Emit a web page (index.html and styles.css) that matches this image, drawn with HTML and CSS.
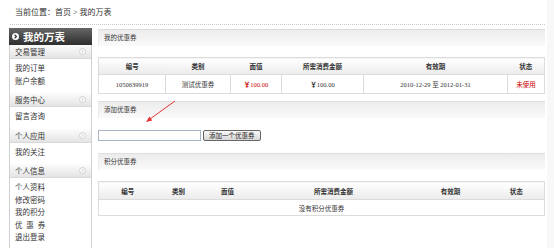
FILE: index.html
```html
<!DOCTYPE html>
<html lang="zh-CN">
<head>
  <meta charset="UTF-8">
  <meta name="viewport" content="width=device-width, initial-scale=1">
  <title>我的万表 - 我的优惠券</title>
  <link rel="stylesheet" href="styles.css">
</head>
<body>

<div class="page">
  <div class="crumb">当前位置：首页 &gt; 我的万表</div>

  <div class="wrap">
    <div class="side">
      <div class="side-title">
        <svg class="go" width="7" height="7" viewBox="0 0 7 7"><circle cx="3.5" cy="3.5" r="3.5" fill="#fff"/><path d="M2.6 1.8 L4.4 3.5 L2.6 5.2" fill="none" stroke="#333" stroke-width="1.2"/></svg>
        我的万表
      </div>

      <div class="group">交易管理
        <svg class="more" width="7" height="7" viewBox="0 0 7 7"><circle cx="3.5" cy="3.5" r="3" fill="#fff" stroke="#c4c4c4" stroke-width="0.8"/><path d="M2.9 2.2 L4.1 3.5 L2.9 4.8" fill="none" stroke="#aaa" stroke-width="0.8"/></svg>
      </div>
      <div class="items">
        <div>我的订单</div>
        <div>账户余额</div>
      </div>

      <div class="group">服务中心
        <svg class="more" width="7" height="7" viewBox="0 0 7 7"><circle cx="3.5" cy="3.5" r="3" fill="#fff" stroke="#c4c4c4" stroke-width="0.8"/><path d="M2.9 2.2 L4.1 3.5 L2.9 4.8" fill="none" stroke="#aaa" stroke-width="0.8"/></svg>
      </div>
      <div class="items">
        <div>留言咨询</div>
      </div>

      <div class="group">个人应用
        <svg class="more" width="7" height="7" viewBox="0 0 7 7"><circle cx="3.5" cy="3.5" r="3" fill="#fff" stroke="#c4c4c4" stroke-width="0.8"/><path d="M2.9 2.2 L4.1 3.5 L2.9 4.8" fill="none" stroke="#aaa" stroke-width="0.8"/></svg>
      </div>
      <div class="items">
        <div>我的关注</div>
      </div>

      <div class="group">个人信息
        <svg class="more" width="7" height="7" viewBox="0 0 7 7"><circle cx="3.5" cy="3.5" r="3" fill="#fff" stroke="#c4c4c4" stroke-width="0.8"/><path d="M2.9 2.2 L4.1 3.5 L2.9 4.8" fill="none" stroke="#aaa" stroke-width="0.8"/></svg>
      </div>
      <div class="items">
        <div>个人资料</div>
        <div>修改密码</div>
        <div>我的积分</div>
        <div class="spaced">优 惠 券</div>
        <div>退出登录</div>
      </div>
    </div>

    <div class="main">
      <div class="bar">我的优惠券</div>
      <table class="list mine">
        <colgroup>
          <col style="width:67px"><col style="width:65px"><col style="width:51px">
          <col style="width:82px"><col style="width:144px"><col style="width:37px">
        </colgroup>
        <thead>
          <tr><th>编号</th><th>类别</th><th>面值</th><th>所需消费金额</th><th>有效期</th><th>状态</th></tr>
        </thead>
        <tbody>
          <tr>
            <td>1050639919</td>
            <td>测试优惠券</td>
            <td class="red"><b>￥</b>100.00</td>
            <td><b>￥</b>100.00</td>
            <td>2010-12-29 至 2012-01-31</td>
            <td class="red">未使用</td>
          </tr>
        </tbody>
      </table>

      <div class="bar bar-add">添加优惠券</div>
      <div class="add-row">
        <input type="text">
        <button>添加一个优惠券</button>
      </div>

      <div class="bar bar-points">积分优惠券</div>
      <table class="list points">
        <colgroup>
          <col style="width:58px"><col style="width:44px"><col style="width:54px">
          <col style="width:158px"><col style="width:76px"><col style="width:56px">
        </colgroup>
        <thead>
          <tr><th>编号</th><th>类别</th><th>面值</th><th>所需消费金额</th><th>有效期</th><th>状态</th></tr>
        </thead>
        <tbody>
          <tr><td colspan="6">没有积分优惠券</td></tr>
        </tbody>
      </table>

      <!-- 标注箭头 -->
      <svg class="mark" width="36" height="28" viewBox="0 0 36 28">
        <line x1="33" y1="3" x2="8" y2="21" stroke="#e53333" stroke-width="1"/>
        <polygon points="4,24 10.3,22.5 7.4,18.4" fill="#e53333"/>
      </svg>
    </div>
  </div>
</div>

</body>
</html>
```

FILE: styles.css
```css
html { background: #f8f8f8; }
body { margin: 0; font-family: "Liberation Serif", "Noto Sans CJK SC", serif; font-size: 7px; color: #333; }
.page { width: 547px; height: 248px; background: #fff; overflow: hidden; }

.crumb { height: 24px; line-height: 26px; margin: 0 2px 0 10px; padding-left: 5px; font-size: 8px; border-bottom: 1px dotted #c8c8c8; }

.wrap { display: flex; margin-top: 3px; }

.side { width: 81px; margin-left: 9px; min-height: 230px; border-left: 1px solid #d0d0d0; border-right: 1px solid #d0d0d0; }
.side-title { display: flex; align-items: center; gap: 4px; height: 17px; margin: 0 -1px; padding-left: 3px; background: linear-gradient(#666, #2e2e2e); color: #fff; font-size: 10.5px; font-weight: bold; }
.group { display: flex; align-items: center; justify-content: space-between; height: 13px; padding: 0 5px; background: linear-gradient(#fcfcfc, #e4e4e4); border-bottom: 1px solid #d8d8d8; font-size: 7.5px; }
.items { padding: 4px 0 5px 5px; font-size: 7.5px; line-height: 12.5px; }
.items .spaced { word-spacing: 2px; }

.main { position: relative; width: 447px; margin-left: 6px; padding-top: 1px; }
.bar { height: 16px; line-height: 16px; padding-left: 5px; font-size: 6.5px; background: linear-gradient(#ececec, #fafafa); border-top: 1px solid #dedede; border-left: 1px solid #ececec; }
.bar-add { margin-top: 7px; }
.bar-points { margin-top: 12px; }

.list { width: 446px; margin-top: 11px; table-layout: fixed; border-collapse: collapse; border: 1px solid #dcdcdc; font-size: 6.5px; }
.list th { background: linear-gradient(#fff, #ebebeb); font-weight: bold; text-align: center; padding: 0; }
.list td { text-align: center; padding: 0; border: 1px solid #dcdcdc; }
.mine th { height: 16px; }
.mine td { height: 18px; }
.points { margin-top: 11px; }
.points th { height: 17px; }
.points td { height: 15px; }
.red { color: #c00; }

.add-row { display: flex; align-items: center; gap: 2px; margin-top: 11px; }
.add-row input { width: 101px; height: 9px; margin: 0; padding: 0; border: 1px solid #a7b6c6; }
.add-row button { height: 11px; margin: 1px 0 0; padding: 0 5px; font-family: inherit; font-size: 6.5px; line-height: 9px; color: #222; background: linear-gradient(#f8f8f8, #d8d8d8); border: 1px solid #666; border-radius: 2px; }

.mark { position: absolute; left: 44px; top: 70px; }
```
